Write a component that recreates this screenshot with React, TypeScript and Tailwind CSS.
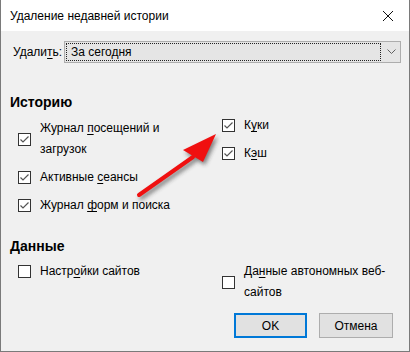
import React from "react";

const font = { fontFamily: '"Liberation Sans", Arial, sans-serif' };

function Box({ checked }: { checked: boolean }) {
  return (
    <div className="w-[13px] h-[13px] border border-[#333333] bg-white flex items-center justify-center shrink-0">
      {checked && (
        <svg width="11" height="11" viewBox="0 0 11 11">
          <path d="M1.5 5.5 L4 8 L9.5 2.5" fill="none" stroke="#555" strokeWidth="1.2" />
        </svg>
      )}
    </div>
  );
}

function U({ children }: { children: React.ReactNode }) {
  return <span className="underline underline-offset-2 decoration-1">{children}</span>;
}

function Item({ checked, children }: { checked: boolean; children: React.ReactNode }) {
  return (
    <div className="flex gap-[9px] items-center">
      <Box checked={checked} />
      <div className="leading-[21px] whitespace-nowrap">{children}</div>
    </div>
  );
}

export default function App() {
  return (
    <div className="relative w-[410px] h-[352px] bg-[#f0f0f0] text-[12px] text-black border-l border-r border-b border-[#7a7a7a] overflow-hidden" style={font}>
      <div className="h-[31px] bg-white flex items-center justify-between pl-[9px] pr-[15px]">
        <span className="text-[12px]">Удаление недавней истории</span>
        <svg width="12" height="12" viewBox="0 0 12 12">
          <path d="M1 1 L11 11 M11 1 L1 11" stroke="#111" strokeWidth="1" />
        </svg>
      </div>
      <div className="flex items-center mt-[10px] pl-[12px]">
        <span className="w-[51px] whitespace-nowrap">Удали<U>т</U>ь:</span>
        <div className="w-[337px] h-[22px] border border-[#adadad] bg-[#e5e5e5] flex items-stretch">
          <div className="flex-1 m-[1px] border border-dotted border-[#222] flex items-center pl-[4px]">За сегодня</div>
          <div className="w-[18px] flex items-center justify-center">
            <svg width="9" height="6" viewBox="0 0 9 6">
              <path d="M0.5 0.5 L4.5 4.5 L8.5 0.5" fill="none" stroke="#606060" strokeWidth="1" />
            </svg>
          </div>
        </div>
      </div>
      <div className="pl-[9px] mt-[29px] font-bold text-[14px] leading-[20px]">Историю</div>
      <div className="grid grid-cols-[204px_1fr] pl-[17px]">
        <div className="flex flex-col gap-[7px] pt-[6px]">
          <Item checked>
            Журнал <U>п</U>осещений и<br />загрузок
          </Item>
          <Item checked>
            Активные <U>с</U>еансы
          </Item>
          <Item checked>
            Журнал <U>ф</U>орм и поиска
          </Item>
        </div>
        <div className="flex flex-col gap-[7px] pt-[3px]">
          <Item checked>
            К<U>у</U>ки
          </Item>
          <Item checked>
            К<U>э</U>ш
          </Item>
        </div>
      </div>
      <div className="pl-[9px] mt-[20px] font-bold text-[14px] leading-[20px]">Данные</div>
      <div className="grid grid-cols-[204px_1fr] pl-[17px] pt-[5px] items-start">
        <div>
          <Item checked={false}>
            Настр<U>о</U>йки сайтов
          </Item>
        </div>
        <div>
          <Item checked={false}>
            Да<U>н</U>ные автономных веб-<br />сайтов
          </Item>
        </div>
      </div>
      <div className="absolute right-[16px] bottom-[13px] flex gap-[12px]">
        <button className="w-[73px] h-[25px] border-2 border-[#0078d7] bg-[#e1e1e1] flex items-center justify-center">OK</button>
        <button className="w-[74px] h-[25px] border border-[#adadad] bg-[#e1e1e1] flex items-center justify-center">Отмена</button>
      </div>
      <svg className="absolute left-0 top-0 pointer-events-none" width="410" height="352">
        <defs>
          <filter id="sh" x="-20%" y="-20%" width="140%" height="140%">
            <feGaussianBlur stdDeviation="2" />
          </filter>
        </defs>
        <g transform="translate(2,3)" filter="url(#sh)" opacity="0.6">
          <path d="M138 195 L192 157" stroke="#333" strokeWidth="4" strokeLinecap="round" />
          <path d="M215 134 L182 150 L202 162 Z" fill="#333" />
        </g>
        <path d="M138 195 L192 157" stroke="#f01010" strokeWidth="4" strokeLinecap="round" />
        <path d="M215 134 L182 150 L202 162 Z" fill="#f01010" />
      </svg>
    </div>
  );
}
